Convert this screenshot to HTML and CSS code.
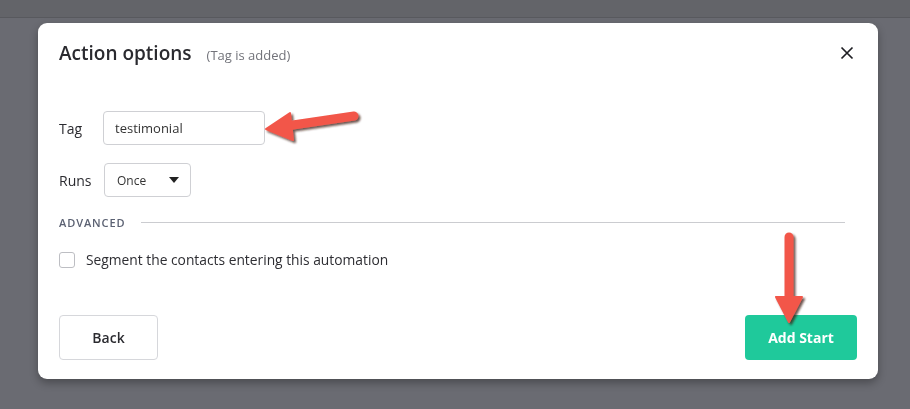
FILE: index.html
```html
<!DOCTYPE html>
<html lang="en">
<head>
  <meta charset="UTF-8">
  <meta name="viewport" content="width=device-width, initial-scale=1.0">
  <title>Action options</title>
  <link rel="stylesheet" href="styles.css">
</head>
<body>
  <div class="topbar"></div>

  <div class="overlay">
    <div class="modal">
      <div class="modal-header">
        <h2>Action options</h2>
        <span class="subtitle">(Tag is added)</span>
        <button class="close" aria-label="Close">
          <svg width="14" height="14" viewBox="0 0 14 14">
            <path d="M1.5 1.5 L12.5 12.5 M12.5 1.5 L1.5 12.5" stroke="#1f1f24" stroke-width="1.7" fill="none"/>
          </svg>
        </button>
      </div>

      <div class="field tag-field">
        <label>Tag</label>
        <div class="input">testimonial</div>
      </div>

      <div class="field runs-field">
        <label>Runs</label>
        <div class="select">
          <span>Once</span>
          <svg width="10" height="6" viewBox="0 0 10 6"><path d="M0 0 L10 0 L5 6 Z" fill="#222"/></svg>
        </div>
      </div>

      <div class="section-title">
        <span>ADVANCED</span>
        <div class="rule"></div>
      </div>

      <div class="check-row">
        <span class="checkbox"></span>
        <span>Segment the contacts entering this automation</span>
      </div>

      <div class="modal-footer">
        <button class="btn btn-back">Back</button>
        <button class="btn btn-primary">Add Start</button>
      </div>
    </div>
  </div>

  <!-- annotation arrows -->
  <svg class="annotations" width="910" height="409" viewBox="0 0 910 409">
    <defs>
      <filter id="shade" x="-20%" y="-20%" width="140%" height="140%">
        <feDropShadow dx="2" dy="2" stdDeviation="1.2" flood-color="#3a1a14" flood-opacity="0.75"/>
      </filter>
    </defs>
    <g filter="url(#shade)" fill="#f2574a" stroke="#f2574a">
      <path d="M354 116 L286 126" stroke-width="9" stroke-linecap="round" fill="none"/>
      <path d="M266 129 L290 113 L293 140 Z" stroke-width="2" stroke-linejoin="round"/>
      <path d="M789 237 L789 300" stroke-width="9" stroke-linecap="round" fill="none"/>
      <path d="M789 322 L776 297 L802 297 Z" stroke-width="2" stroke-linejoin="round"/>
    </g>
  </svg>
</body>
</html>
```

FILE: styles.css
```css
body {
  margin: 0;
  width: 910px;
  height: 409px;
  overflow: hidden;
  background-color: #6a6b72;
  font-family: "Open Sans", "Noto Sans", Arial, sans-serif;
  color: #2b2b30;
}
.topbar {
  height: 17px;
  background-color: #636469;
  border-bottom: 1px solid #58595e;
}
.overlay {
  position: fixed;
  top: 0;
  left: 0;
  right: 0;
  bottom: 0;
  padding: 23px 0 0 38px;
}
.modal {
  width: 840px;
  height: 356px;
  box-sizing: border-box;
  background-color: #fff;
  border-radius: 9px;
  box-shadow: 0 4px 8px rgba(0, 0, 0, 0.3);
  padding: 20px 21px 19px 21px;
  display: flex;
  flex-direction: column;
}
.modal-header {
  display: flex;
  align-items: center;
  height: 20px;
}
.modal-header h2 {
  margin: 0;
  font-size: 19px;
  font-weight: 600;
  color: #2a2a2f;
  line-height: 20px;
}
.subtitle {
  margin-left: 15px;
  font-size: 13px;
  color: #72737a;
  margin-top: 3px;
}
.close {
  margin-left: auto;
  margin-right: 3px;
  border: none;
  background: none;
  padding: 0;
  width: 14px;
  height: 14px;
  display: flex;
}
.field {
  display: flex;
  align-items: center;
  height: 34px;
}
.field label {
  font-size: 14px;
  color: #2b2b30;
}
.tag-field {
  margin-top: 48px;
}
.tag-field label {
  width: 44px;
}
.runs-field {
  margin-top: 18px;
}
.runs-field label {
  width: 45px;
}
.input {
  width: 162px;
  height: 34px;
  box-sizing: border-box;
  border: 1px solid #cfd0d4;
  border-radius: 4px;
  padding: 0 11px;
  display: flex;
  align-items: center;
  font-size: 13px;
  color: #333;
}
.select {
  width: 87px;
  height: 34px;
  box-sizing: border-box;
  border: 1px solid #cfd0d4;
  border-radius: 4px;
  padding: 0 11px 0 12px;
  display: flex;
  align-items: center;
  justify-content: space-between;
  font-size: 12px;
  color: #333;
}
.section-title {
  margin-top: 18px;
  height: 14px;
  display: flex;
  align-items: center;
  margin-right: 12px;
}
.section-title span {
  font-size: 11px;
  font-weight: 600;
  letter-spacing: 0.9px;
  color: #5b6172;
}
.rule {
  flex: 1;
  height: 1px;
  background-color: #cbccd0;
  margin-left: 16px;
}
.check-row {
  margin-top: 22px;
  display: flex;
  align-items: center;
  height: 17px;
  font-size: 13.8px;
  font-weight: 500;
  color: #2e2e33;
}
.checkbox {
  width: 16px;
  height: 16px;
  box-sizing: border-box;
  border: 1px solid #bdbec3;
  border-radius: 3px;
  margin-right: 11px;
}
.modal-footer {
  margin-top: auto;
  display: flex;
  justify-content: space-between;
}
.btn {
  height: 45px;
  border-radius: 4px;
  font-family: inherit;
  font-size: 14px;
  cursor: pointer;
}
.btn-back {
  width: 99px;
  background-color: #fff;
  border: 1px solid #d6d7db;
  color: #2b2b30;
  font-weight: 600;
}
.btn-primary {
  width: 112px;
  background-color: #1fc99b;
  border: none;
  color: #fff;
  font-weight: 700;
}
.annotations {
  position: absolute;
  top: 0;
  left: 0;
  pointer-events: none;
}
```
